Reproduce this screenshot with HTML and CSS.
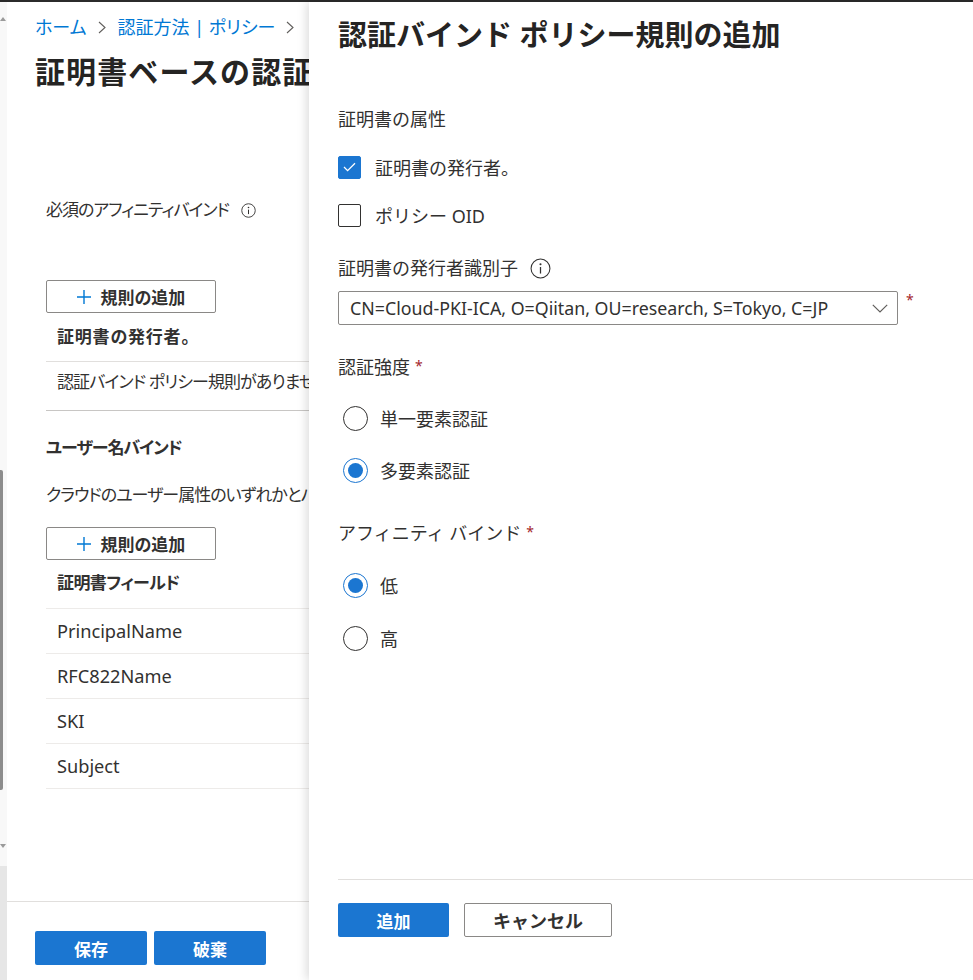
FILE: index.html
```html
<!DOCTYPE html>
<html lang="ja">
<head>
<meta charset="utf-8">
<title>認証バインド ポリシー規則の追加</title>
<link rel="stylesheet" href="styles.css">
</head>
<body>
<div class="topline"></div>
<div class="app">
  <div class="scrollstrip">
    <div class="track">
      <svg class="arrow arrow-up" width="6" height="4" viewBox="0 0 6 4"><path d="M0 4 L3 0 L6 4 Z" fill="#9a9a9a"/></svg>
      <div class="thumb"></div>
      <svg class="arrow arrow-down" width="6" height="4" viewBox="0 0 6 4"><path d="M0 0 L6 0 L3 4 Z" fill="#9a9a9a"/></svg>
    </div>
    <div class="strip-bottom"></div>
  </div>

  <main class="blade">
    <div class="blade-body">
      <nav class="crumbs">
        <a class="crumb">ホーム</a>
        <svg class="crumb-sep" width="8" height="13" viewBox="0 0 8 13"><path d="M1 1 L7 6.5 L1 12" fill="none" stroke="#605e5c" stroke-width="1.1"/></svg>
        <a class="crumb">認証方法 | ポリシー</a>
        <svg class="crumb-sep" width="8" height="13" viewBox="0 0 8 13"><path d="M1 1 L7 6.5 L1 12" fill="none" stroke="#605e5c" stroke-width="1.1"/></svg>
      </nav>
      <h1 class="page-title">証明書ベースの認証の構成</h1>

      <div class="section">
        <div class="label-row affinity-label">
          <span class="affinity-text">必須のアフィニティバインド</span>
          <svg class="info info-sm" width="15" height="15" viewBox="0 0 20 20"><circle cx="10" cy="10" r="9" fill="none" stroke="#323130" stroke-width="1.2"/><circle cx="10" cy="6" r="1.1" fill="#323130"/><path d="M10 8.8 V14.8" stroke="#323130" stroke-width="1.4"/></svg>
        </div>

        <button class="add-btn add-first">
          <svg width="14" height="14" viewBox="0 0 14 14"><path d="M7 0 V14 M0 7 H14" stroke="#0078d4" stroke-width="1.4"/></svg>
          <span>規則の追加</span>
        </button>

        <div class="tbl">
          <div class="th th-first">証明書の発行者。</div>
          <div class="td td-empty">認証バインド ポリシー規則がありません。</div>
        </div>

        <div class="sub-title">ユーザー名バインド</div>
        <div class="desc">クラウドのユーザー属性のいずれかとバインドする証明書フィールドを選択します。</div>

        <button class="add-btn add-second">
          <svg width="14" height="14" viewBox="0 0 14 14"><path d="M7 0 V14 M0 7 H14" stroke="#0078d4" stroke-width="1.4"/></svg>
          <span>規則の追加</span>
        </button>

        <div class="tbl">
          <div class="th th-second">証明書フィールド</div>
          <div class="td td-latin">PrincipalName</div>
          <div class="td td-latin">RFC822Name</div>
          <div class="td td-latin">SKI</div>
          <div class="td td-latin">Subject</div>
        </div>
      </div>
    </div>
    <div class="blade-footer">
      <button class="btn-primary btn-save">保存</button>
      <button class="btn-primary btn-save">破棄</button>
    </div>
  </main>

  <aside class="panel">
    <div class="panel-body">
      <h2 class="panel-title">認証バインド ポリシー規則の追加</h2>

      <div class="f-label attr-label">証明書の属性</div>

      <div class="check-row check-first">
        <span class="cb cb-on">
          <svg width="13" height="10" viewBox="0 0 13 10"><path d="M1 5 L4.6 8.6 L12 1.2" fill="none" stroke="#fff" stroke-width="1.3"/></svg>
        </span>
        <span>証明書の発行者。</span>
      </div>
      <div class="check-row">
        <span class="cb"></span>
        <span>ポリシー OID</span>
      </div>

      <div class="f-label issuer-label">
        <span>証明書の発行者識別子</span>
        <svg class="info info-lg" width="21" height="21" viewBox="0 0 20 20"><circle cx="10" cy="10" r="9" fill="none" stroke="#323130" stroke-width="1"/><circle cx="10" cy="6" r="1" fill="#323130"/><path d="M10 8.6 V14.8" stroke="#323130" stroke-width="1.2"/></svg>
      </div>

      <div class="dd-row">
        <div class="dropdown">
          <span class="dd-value">CN=Cloud-PKI-ICA, O=Qiitan, OU=research, S=Tokyo, C=JP</span>
          <svg class="dd-chev" width="16" height="9" viewBox="0 0 16 9"><path d="M0.8 0.8 L8 8 L15.2 0.8" fill="none" stroke="#605e5c" stroke-width="1.2"/></svg>
        </div>
        <span class="req req-dd">*</span>
      </div>

      <div class="f-label strength-label">認証強度<span class="req">*</span></div>

      <div class="radio-row radio-first">
        <span class="radio"></span>
        <span>単一要素認証</span>
      </div>
      <div class="radio-row">
        <span class="radio radio-on"><span class="dot"></span></span>
        <span>多要素認証</span>
      </div>

      <div class="f-label bind-label">アフィニティ バインド<span class="req">*</span></div>

      <div class="radio-row radio-low">
        <span class="radio radio-on"><span class="dot"></span></span>
        <span>低</span>
      </div>
      <div class="radio-row">
        <span class="radio"></span>
        <span>高</span>
      </div>
    </div>

    <div class="panel-footer">
      <button class="btn-primary btn-add">追加</button>
      <button class="btn-default">キャンセル</button>
    </div>
  </aside>
</div>
</body>
</html>
```

FILE: styles.css
```css
* {
  box-sizing: border-box;
  margin: 0;
  padding: 0;
}

html, body {
  height: 100%;
}

body {
  background: #ffffff;
  color: #323130;
  font-family: "Noto Sans", "Noto Sans CJK JP", sans-serif;
  font-size: 17px;
  overflow: hidden;
}

button {
  font-family: inherit;
  color: inherit;
  cursor: pointer;
}

.topline {
  height: 2px;
  background: #2b2b2b;
}

.app {
  display: flex;
  height: 978px;
}

/* left scroll strip */
.scrollstrip {
  width: 7px;
  flex: none;
  display: flex;
  flex-direction: column;
}

.track {
  height: 864px;
  background: #f8f8f8;
  display: flex;
  flex-direction: column;
  align-items: flex-start;
}

.arrow {
  display: block;
  flex: none;
}

.arrow-up {
  margin-top: 15px;
}

.thumb {
  margin-top: 449px;
  width: 3px;
  height: 320px;
  background: #8c8c8c;
  border-radius: 0 2px 2px 0;
}

.arrow-down {
  margin-top: 54px;
}

.strip-bottom {
  flex: 1;
  background: #e6e6e6;
}

/* left blade */
.blade {
  width: 302px;
  flex: none;
  display: flex;
  flex-direction: column;
  overflow: hidden;
  background: #ffffff;
}

.blade-body {
  flex: 1;
  padding-left: 28px;
  white-space: nowrap;
  font-size: 17px;
  font-feature-settings: "palt";
}

.crumbs {
  margin-top: 13px;
  height: 24px;
  display: flex;
  align-items: center;
  font-size: 18px;
  color: #0078d4;
}

.crumb {
  line-height: 24px;
}

.crumb-sep {
  margin: 0 12px 0 11px;
  flex: none;
}

.page-title {
  margin-top: 13px;
  height: 40px;
  line-height: 40px;
  font-size: 30px;
  letter-spacing: 1.1px;
  font-weight: 700;
  color: #252423;
  font-feature-settings: normal;
}

.section {
  margin-left: 11px;
}

.label-row {
  display: flex;
  align-items: center;
  height: 24px;
  line-height: 24px;
}

.affinity-label {
  margin-top: 106px;
}

.affinity-text {
  letter-spacing: -1px;
}

.info {
  flex: none;
  display: block;
}

.info-sm {
  margin-left: 12px;
}

.add-btn {
  width: 170px;
  height: 33px;
  border: 1px solid #8a8886;
  border-radius: 2px;
  background: #ffffff;
  display: flex;
  align-items: center;
  justify-content: center;
  gap: 10px;
  font-size: 17px;
  font-weight: 700;
  font-feature-settings: "palt";
}

.add-first {
  margin-top: 58px;
}

.add-second {
  margin-top: 20px;
}

.th {
  padding-left: 11px;
  font-weight: 700;
  height: 49px;
  border-bottom: 1px solid #e1dfdd;
}

.th-first {
  line-height: 48px;
  letter-spacing: 0.8px;
}

.th-second {
  line-height: 46px;
  border-bottom-color: #edebe9;
  letter-spacing: -0.6px;
}

.td {
  padding-left: 11px;
  height: 45px;
  line-height: 44px;
  border-bottom: 1px solid #edebe9;
}

.td-latin {
  font-size: 18.2px;
}

.td-empty {
  height: 49px;
  line-height: 40px;
  border-bottom-color: #c8c6c4;
  letter-spacing: -0.9px;
}

.sub-title {
  margin-top: 25px;
  height: 24px;
  line-height: 24px;
  font-weight: 700;
  letter-spacing: -1.1px;
}

.desc {
  margin-top: 23px;
  height: 24px;
  line-height: 24px;
  letter-spacing: -1px;
}

.blade-footer {
  flex: none;
  height: 79px;
  border-top: 1px solid #e1dfdd;
  padding: 29px 0 0 28px;
  display: flex;
  gap: 7px;
  align-items: flex-start;
}

.btn-primary {
  height: 34px;
  border: none;
  border-radius: 2px;
  background: #1b76d1;
  color: #ffffff;
  font-size: 17px;
  font-weight: 700;
  display: flex;
  align-items: center;
  justify-content: center;
}

.btn-save {
  width: 112px;
}

/* right panel */
.panel {
  flex: 1;
  position: relative;
  z-index: 1;
  background: #ffffff;
  box-shadow: -3px 0 9px rgba(0, 0, 0, 0.13);
  display: flex;
  flex-direction: column;
  padding-left: 29px;
  white-space: nowrap;
  font-size: 18px;
}

.panel-body {
  flex: 1;
}

.panel-title {
  margin-top: 13px;
  height: 40px;
  line-height: 40px;
  font-size: 29px;
  font-weight: 700;
  color: #252423;
}

.f-label {
  height: 24px;
  line-height: 24px;
  display: flex;
  align-items: center;
}

.attr-label {
  margin-top: 52px;
}

.check-row {
  display: flex;
  align-items: center;
  height: 24px;
  gap: 14px;
  margin-top: 24px;
}

.cb {
  width: 23px;
  height: 23px;
  border: 1px solid #323130;
  border-radius: 2px;
  display: flex;
  align-items: center;
  justify-content: center;
  flex: none;
}

.cb-on {
  background: #1b76d1;
  border-color: #1b76d1;
}

.issuer-label {
  margin-top: 29px;
}

.info-lg {
  margin-left: 12px;
}

.dd-row {
  margin-top: 11px;
  display: flex;
  align-items: flex-start;
}

.dropdown {
  width: 560px;
  height: 34px;
  border: 1px solid #8a8886;
  border-radius: 2px;
  display: flex;
  align-items: center;
  justify-content: space-between;
  padding: 0 9px 0 11px;
}

.dd-value {
  font-size: 17.8px;
}

.dd-chev {
  display: block;
  flex: none;
}

.req {
  color: #a4262c;
  font-size: 14px;
  line-height: 14px;
  margin-left: 5px;
  margin-top: 4px;
  align-self: flex-start;
}

.req-dd {
  margin-left: 8px;
  margin-top: 2px;
}

.strength-label {
  margin-top: 30px;
}

.radio-row {
  display: flex;
  align-items: center;
  height: 26px;
  gap: 12px;
  padding-left: 5px;
  margin-top: 26px;
}

.radio {
  width: 25px;
  height: 25px;
  border: 1px solid #323130;
  border-radius: 50%;
  flex: none;
  display: flex;
  align-items: center;
  justify-content: center;
}

.radio-on {
  border-color: #1b76d1;
}

.dot {
  width: 15px;
  height: 15px;
  border-radius: 50%;
  background: #1b76d1;
}

.bind-label {
  margin-top: 38px;
}

.radio-low {
  margin-top: 27px;
}

.radio-row + .radio-row {
  margin-top: 26px;
}

.radio-low + .radio-row {
  margin-top: 27px;
}

.panel-footer {
  flex: none;
  height: 101px;
  border-top: 1px solid #e1dfdd;
  padding-top: 23px;
  display: flex;
  gap: 15px;
  align-items: flex-start;
}

.btn-add {
  width: 111px;
}

.btn-default {
  width: 148px;
  height: 34px;
  border: 1px solid #8a8886;
  border-radius: 2px;
  background: #ffffff;
  font-size: 18px;
  font-weight: 700;
  display: flex;
  align-items: center;
  justify-content: center;
}
```
